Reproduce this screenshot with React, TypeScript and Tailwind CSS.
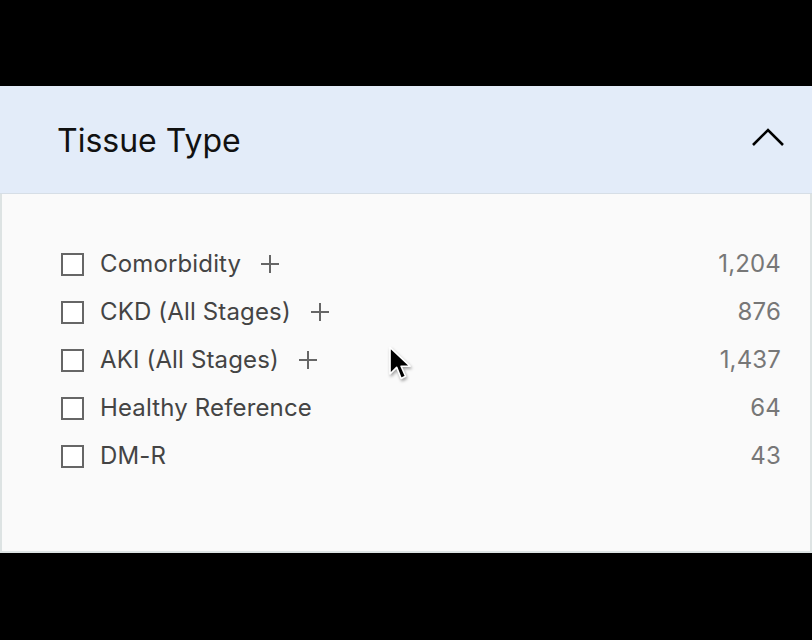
import React from "react";

const rows = [
  { label: "Comorbidity", plus: true, count: "1,204" },
  { label: "CKD (All Stages)", plus: true, count: "876" },
  { label: "AKI (All Stages)", plus: true, count: "1,437" },
  { label: "Healthy Reference", plus: false, count: "64" },
  { label: "DM-R", plus: false, count: "43" },
];

function Plus() {
  return (
    <svg width="20" height="20" viewBox="0 0 20 20" className="ml-[19px]">
      <path d="M10 1v18M1 10h18" stroke="#666" strokeWidth="2" fill="none" />
    </svg>
  );
}

function Cursor() {
  return (
    <svg width="28" height="40" viewBox="0 0 24 36" className="absolute left-[386px] top-[344px]" style={{ filter: "drop-shadow(1px 2px 1.5px rgba(0,0,0,0.35))" }}>
      <path d="M3 3 L3 27 L9 21 L13 31 L17 29 L13 20 L21 20 Z" fill="#000" stroke="#fff" strokeWidth="1.5" strokeLinejoin="round" />
    </svg>
  );
}

export default function App() {
  return (
    <div className="relative w-[812px] h-[640px] bg-black flex flex-col" style={{ fontFamily: "Inter, 'Liberation Sans', sans-serif" }}>
      <div className="h-[86px] shrink-0" />
      <div className="h-[108px] shrink-0 bg-[#e3ecf9] border-b border-[#d6dee6] flex items-center justify-between pl-[57px] pr-[27px]">
        <span className="text-[32px] text-[#111] mt-[2px]">Tissue Type</span>
        <svg width="34" height="22" viewBox="0 0 34 22" className="mt-[-6px]">
          <path d="M2 19 L17 4 L32 19" stroke="#000" strokeWidth="2.6" fill="none" />
        </svg>
      </div>
      <div className="h-[359px] shrink-0 bg-[#fafafa] border-x-2 border-b-2 border-[#dde3e3] pt-[46px] pl-[59px] pr-[29px]">
        {rows.map((r) => (
          <div key={r.label} className="h-[48px] flex items-center">
            <div className="w-[23px] h-[23px] border-2 border-[#666] bg-white" />
            <span className="ml-[16px] text-[24px] text-[#444] tracking-[0.15px]">{r.label}</span>
            {r.plus && <Plus />}
            <span className="ml-auto text-[24px] text-[#777] tracking-[0.15px]">{r.count}</span>
          </div>
        ))}
      </div>
      <Cursor />
    </div>
  );
}
